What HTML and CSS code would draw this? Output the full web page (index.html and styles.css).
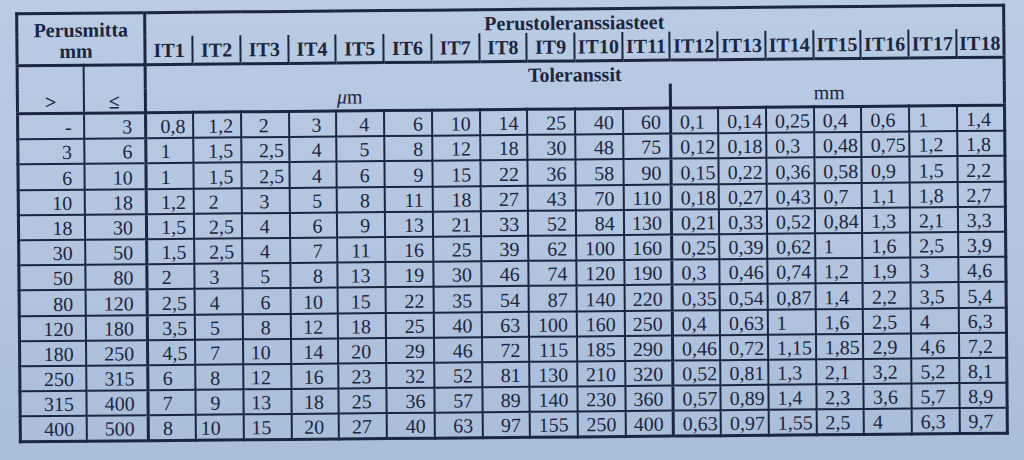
FILE: index.html
```html
<!DOCTYPE html>
<html lang="fi">
<head>
<meta charset="utf-8">
<title>Perustoleranssiasteet</title>
<link rel="stylesheet" href="styles.css">
</head>
<body>
<div class="sheet">
<table class="tol">
<colgroup><col class="c1"><col class="c2"><col span="18"></colgroup>
<thead>
<tr class="h1a">
<th class="pm" colspan="2" rowspan="2"><span class="pm1">Perusmitta</span><span class="pm2">mm</span></th>
<th class="grp" colspan="18">Perustoleranssiasteet</th>
</tr>
<tr class="h1b">
<th>IT1</th><th>IT2</th><th>IT3</th><th>IT4</th><th>IT5</th><th>IT6</th><th>IT7</th><th>IT8</th><th>IT9</th><th>IT10</th><th class="split">IT11</th><th>IT12</th><th>IT13</th><th>IT14</th><th>IT15</th><th>IT16</th><th>IT17</th><th class="last">IT18</th>
</tr>
<tr class="h2a">
<th class="gt" rowspan="2">&gt;</th>
<th class="le" rowspan="2">≤</th>
<th class="tl" colspan="18">Toleranssit</th>
</tr>
<tr class="h2b">
<th class="um" colspan="11"><i>μ</i>m</th>
<th class="mm" colspan="7">mm</th>
</tr>
</thead>
<tbody>
<tr><td>-</td><td>3</td><td>0<span class="f">,8</span></td><td>1<span class="f">,2</span></td><td>2<span class="f"></span></td><td>3</td><td>4</td><td>6</td><td>10</td><td>14</td><td>25</td><td>40</td><td>60</td><td>0,1</td><td>0,14</td><td>0,25</td><td>0,4</td><td>0,6</td><td>1</td><td>1,4</td></tr>
<tr><td>3</td><td>6</td><td>1<span class="f"></span></td><td>1<span class="f">,5</span></td><td>2<span class="f">,5</span></td><td>4</td><td>5</td><td>8</td><td>12</td><td>18</td><td>30</td><td>48</td><td>75</td><td>0,12</td><td>0,18</td><td>0,3</td><td>0,48</td><td>0,75</td><td>1,2</td><td>1,8</td></tr>
<tr><td>6</td><td>10</td><td>1<span class="f"></span></td><td>1<span class="f">,5</span></td><td>2<span class="f">,5</span></td><td>4</td><td>6</td><td>9</td><td>15</td><td>22</td><td>36</td><td>58</td><td>90</td><td>0,15</td><td>0,22</td><td>0,36</td><td>0,58</td><td>0,9</td><td>1,5</td><td>2,2</td></tr>
<tr><td>10</td><td>18</td><td>1<span class="f">,2</span></td><td>2<span class="f"></span></td><td>3<span class="f"></span></td><td>5</td><td>8</td><td>11</td><td>18</td><td>27</td><td>43</td><td>70</td><td>110</td><td>0,18</td><td>0,27</td><td>0,43</td><td>0,7</td><td>1,1</td><td>1,8</td><td>2,7</td></tr>
<tr><td>18</td><td>30</td><td>1<span class="f">,5</span></td><td>2<span class="f">,5</span></td><td>4<span class="f"></span></td><td>6</td><td>9</td><td>13</td><td>21</td><td>33</td><td>52</td><td>84</td><td>130</td><td>0,21</td><td>0,33</td><td>0,52</td><td>0,84</td><td>1,3</td><td>2,1</td><td>3,3</td></tr>
<tr><td>30</td><td>50</td><td>1<span class="f">,5</span></td><td>2<span class="f">,5</span></td><td>4<span class="f"></span></td><td>7</td><td>11</td><td>16</td><td>25</td><td>39</td><td>62</td><td>100</td><td>160</td><td>0,25</td><td>0,39</td><td>0,62</td><td>1</td><td>1,6</td><td>2,5</td><td>3,9</td></tr>
<tr><td>50</td><td>80</td><td>2<span class="f"></span></td><td>3<span class="f"></span></td><td>5<span class="f"></span></td><td>8</td><td>13</td><td>19</td><td>30</td><td>46</td><td>74</td><td>120</td><td>190</td><td>0,3</td><td>0,46</td><td>0,74</td><td>1,2</td><td>1,9</td><td>3</td><td>4,6</td></tr>
<tr><td>80</td><td>120</td><td>2<span class="f">,5</span></td><td>4<span class="f"></span></td><td>6<span class="f"></span></td><td>10</td><td>15</td><td>22</td><td>35</td><td>54</td><td>87</td><td>140</td><td>220</td><td>0,35</td><td>0,54</td><td>0,87</td><td>1,4</td><td>2,2</td><td>3,5</td><td>5,4</td></tr>
<tr><td>120</td><td>180</td><td>3<span class="f">,5</span></td><td>5<span class="f"></span></td><td>8<span class="f"></span></td><td>12</td><td>18</td><td>25</td><td>40</td><td>63</td><td>100</td><td>160</td><td>250</td><td>0,4</td><td>0,63</td><td>1</td><td>1,6</td><td>2,5</td><td>4</td><td>6,3</td></tr>
<tr><td>180</td><td>250</td><td>4<span class="f">,5</span></td><td>7<span class="f"></span></td><td>10<span class="f"></span></td><td>14</td><td>20</td><td>29</td><td>46</td><td>72</td><td>115</td><td>185</td><td>290</td><td>0,46</td><td>0,72</td><td>1,15</td><td>1,85</td><td>2,9</td><td>4,6</td><td>7,2</td></tr>
<tr><td>250</td><td>315</td><td>6<span class="f"></span></td><td>8<span class="f"></span></td><td>12<span class="f"></span></td><td>16</td><td>23</td><td>32</td><td>52</td><td>81</td><td>130</td><td>210</td><td>320</td><td>0,52</td><td>0,81</td><td>1,3</td><td>2,1</td><td>3,2</td><td>5,2</td><td>8,1</td></tr>
<tr><td>315</td><td>400</td><td>7<span class="f"></span></td><td>9<span class="f"></span></td><td>13<span class="f"></span></td><td>18</td><td>25</td><td>36</td><td>57</td><td>89</td><td>140</td><td>230</td><td>360</td><td>0,57</td><td>0,89</td><td>1,4</td><td>2,3</td><td>3,6</td><td>5,7</td><td>8,9</td></tr>
<tr><td>400</td><td>500</td><td>8<span class="f"></span></td><td>10<span class="f"></span></td><td>15<span class="f"></span></td><td>20</td><td>27</td><td>40</td><td>63</td><td>97</td><td>155</td><td>250</td><td>400</td><td>0,63</td><td>0,97</td><td>1,55</td><td>2,5</td><td>4</td><td>6,3</td><td>9,7</td></tr>
</tbody>
</table>
</div>
</body>
</html>
```

FILE: styles.css
```css
html, body {
  margin: 0;
  padding: 0;
}
body {
  width: 1024px;
  height: 460px;
  overflow: hidden;
  background: linear-gradient(180deg, #bacbe4 0%, #b3c5df 50%, #aabdd9 100%);
  font-family: "Liberation Serif", "DejaVu Serif", "Noto Serif", serif;
  color: #1b2640;
}
.sheet {
  padding: 8px 0 0 17px;
}
.tol {
  width: 990px;
  table-layout: fixed;
  border-collapse: collapse;
  border: 3px solid #1b2640;
  transform: rotate(-0.5deg);
  transform-origin: 50% 50%;
  font-family: "Liberation Serif", "DejaVu Serif", "Noto Serif", serif;
  font-size: 20px;
  line-height: 1;
}
.c1 { width: 66px; }
.c2 { width: 62px; }
.tol th, .tol td {
  font-family: "Liberation Serif", "DejaVu Serif", "Noto Serif", serif;
  padding: 0;
  overflow: visible;
  white-space: nowrap;
}
/* header */
.tol th {
  font-weight: bold;
  text-align: center;
}
.pm {
  border-right: 3px solid #1b2640;
  border-bottom: 3px solid #1b2640;
  vertical-align: top;
}
.pm1 {
  display: block;
  padding-top: 5px;
}
.pm2 {
  display: block;
  padding-top: 1px;
  padding-right: 10px;
}
.grp {
  height: 22px;
  vertical-align: bottom;
  padding-bottom: 1px;
}
.h1b th {
  height: 24px;
  border-bottom: 3px solid #1b2640;
  border-left: 2px solid #1b2640;
  vertical-align: bottom;
  padding-bottom: 3px;
}
.h1b th:first-child { border-left: none; }
.h2a th { height: 22px; }
.gt, .le {
  font-weight: normal;
  vertical-align: bottom;
  padding-bottom: 6px;
  border-bottom: 3px solid #1b2640;
}
.gt { border-right: 2px solid #1b2640; padding-left: 4px; }
.le { border-right: 3px solid #1b2640; }
.tl {
  vertical-align: bottom;
  padding-bottom: 0;
}
.h2b th {
  height: 20px;
  font-weight: normal;
  vertical-align: bottom;
  padding-bottom: 3px;
  border-bottom: 3px solid #1b2640;
}
.um {
  text-align: left !important;
  padding-left: 190px !important;
  border-right: 3px solid #1b2640;
}
.mm {
  padding-right: 16px !important;
}
/* body */
.tol td {
  height: 22.2px;
  border: 2px solid #1b2640;
  text-align: right;
  vertical-align: bottom;
  padding-bottom: 1px;
}
.tol td:nth-child(1) { padding-right: 11px; }
.tol td:nth-child(2) { padding-right: 12px; border-right-width: 3px; }
.tol td:nth-child(3) { padding-right: 6px; }
.tol td:nth-child(4) { padding-right: 6px; }
.tol td:nth-child(5) { padding-right: 3px; }
.tol td:nth-child(6),
.tol td:nth-child(7) { padding-right: 14px; }
.tol td:nth-child(n+8) { padding-right: 8px; }
.tol td:nth-child(13) { border-right-width: 3px; }
.tol td:nth-child(n+14) {
  text-align: left;
  padding-right: 0;
  padding-left: 8px;
}
.f {
  display: inline-block;
  width: 16px;
  text-align: left;
}
```
